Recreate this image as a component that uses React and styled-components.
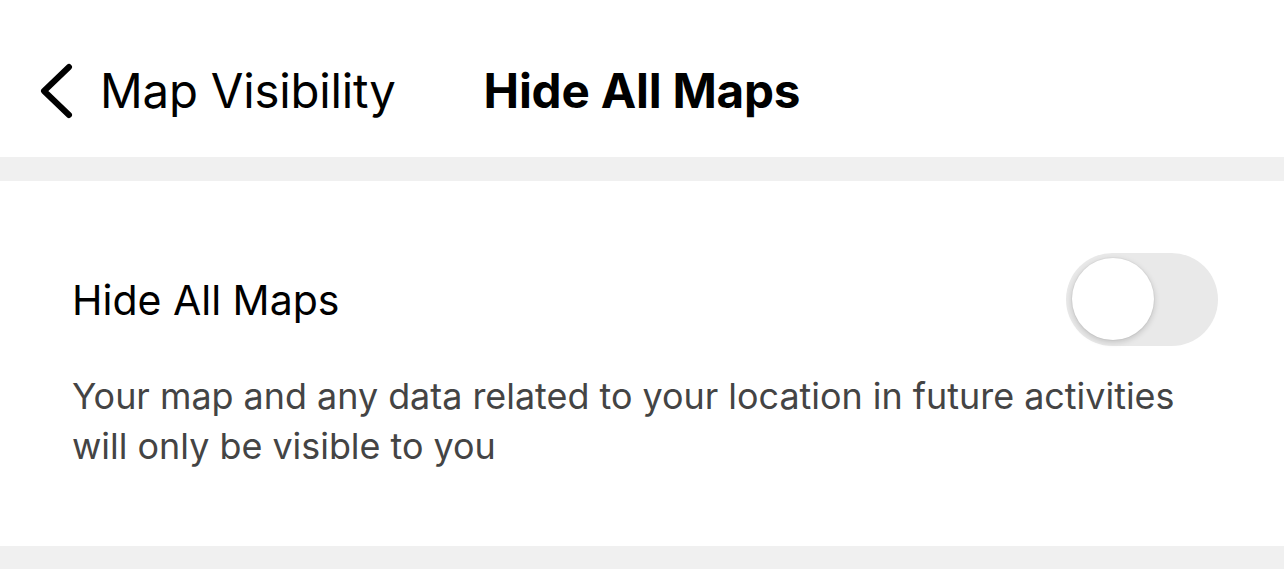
import React from "react";
import styled, { createGlobalStyle } from "styled-components";

const Global = createGlobalStyle`
  html, body {
    margin: 0;
    padding: 0;
    background: #ffffff;
  }
  body {
    font-family: Inter, "Noto Sans", "Liberation Sans", sans-serif;
    color: #000;
  }
`;

const Page = styled.div`
  width: 1284px;
  height: 584px;
  overflow: hidden;
  background: #ffffff;
`;

const Header = styled.header`
  height: 157px;
  display: flex;
  align-items: center;
  padding: 24px 0 0 38px;
  box-sizing: border-box;
`;

const BackButton = styled.button`
  display: flex;
  align-items: center;
  gap: 26px;
  border: 0;
  background: none;
  padding: 0;
  cursor: pointer;
  font: inherit;
  font-size: 47.3px;
  color: #000;
  letter-spacing: -0.2px;
`;

const Title = styled.h1`
  margin: 0 0 0 88px;
  font-size: 47.6px;
  font-weight: 700;
  letter-spacing: -0.2px;
`;

const Divider = styled.div`
  height: ${(p) => p.$h}px;
  background: #f0f0f0;
`;

const Section = styled.section`
  height: 365px;
  box-sizing: border-box;
  padding: 72px 66px 0 72px;
`;

const Row = styled.div`
  display: flex;
  align-items: center;
  justify-content: space-between;
`;

const Label = styled.div`
  font-size: 41px;
  color: #000;
`;

const Track = styled.div`
  width: 152px;
  height: 93px;
  border-radius: 47px;
  background: #e9e9e9;
  position: relative;
`;

const Knob = styled.div`
  position: absolute;
  left: 6px;
  top: 5px;
  width: 82px;
  height: 82px;
  border-radius: 50%;
  background: #fff;
  box-shadow: 0 2px 6px rgba(0, 0, 0, 0.18), 0 0 0 1px rgba(0, 0, 0, 0.03);
`;

const Description = styled.p`
  margin: 25px 0 0;
  font-size: 35.9px;
  line-height: 50px;
  color: #444;
  max-width: 1130px;
`;

const Chevron = () => (
  <svg width="36" height="56" viewBox="0 0 36 56" fill="none">
    <path
      d="M31 4 L6 28 L31 52"
      stroke="#000"
      strokeWidth="6"
      strokeLinecap="round"
      strokeLinejoin="round"
    />
  </svg>
);

export default function App() {
  return (
    <Page>
      <Global />
      <Header>
        <BackButton>
          <Chevron />
          <span>Map Visibility</span>
        </BackButton>
        <Title>Hide All Maps</Title>
      </Header>
      <Divider $h={24} />
      <Section>
        <Row>
          <Label>Hide All Maps</Label>
          <Track>
            <Knob />
          </Track>
        </Row>
        <Description>
          Your map and any data related to your location in future activities
          will only be visible to you
        </Description>
      </Section>
      <Divider $h={23} />
    </Page>
  );
}
